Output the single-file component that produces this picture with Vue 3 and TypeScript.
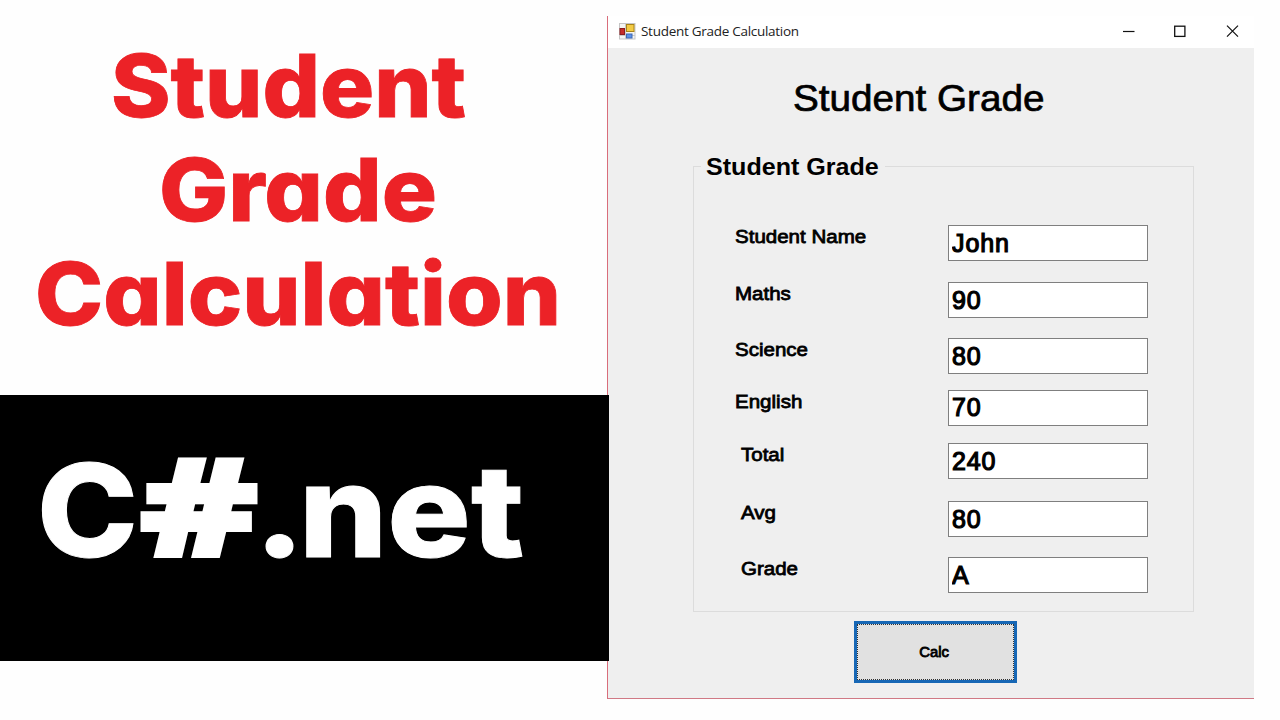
<script setup lang="ts">
import { reactive } from 'vue'

interface Field {
  id: string
  label: string
  value: string
  gap: number
  inset?: boolean
}

interface Run {
  text: string
  x: number
  y: number
  length: number
}

const headline: Run[] = [
  { text: 'Student', x: 111, y: 116.5, length: 355 },
  { text: 'Grade', x: 159, y: 220.5, length: 278 },
  { text: 'Calculation', x: 35, y: 324.5, length: 526 },
]

const platform: Run[] = [
  { text: 'C', x: 37, y: 162, length: 101 },
  { text: '#', x: 140, y: 161, length: 118 },
  { text: '.', x: 254, y: 162, length: 51 },
  { text: 'net', x: 299, y: 162, length: 225 },
]

const fields = reactive<Field[]>([
  { id: 'name', label: 'Student Name', value: 'John', gap: 0 },
  { id: 'maths', label: 'Maths', value: '90', gap: 21 },
  { id: 'science', label: 'Science', value: '80', gap: 20 },
  { id: 'english', label: 'English', value: '70', gap: 15.5 },
  { id: 'total', label: 'Total', value: '240', gap: 17.5, inset: true },
  { id: 'avg', label: 'Avg', value: '80', gap: 22, inset: true },
  { id: 'grade', label: 'Grade', value: 'A', gap: 20, inset: true },
])

function calculate() {
  const total = fields.slice(1, 4).reduce((sum, f) => sum + Number(f.value), 0)
  const avg = total / 3
  fields[4].value = String(total)
  fields[5].value = String(Math.round(avg))
  fields[6].value = avg >= 75 ? 'A' : avg >= 65 ? 'B' : avg >= 55 ? 'C' : 'F'
}
</script>

<template>
  <main class="page">
    <section class="promo">
      <svg class="headline" width="609" height="395" role="heading">
        <text v-for="r in headline" :key="r.text" :x="r.x" :y="r.y" :textLength="r.length" lengthAdjust="spacingAndGlyphs">{{ r.text }}</text>
      </svg>
      <div class="band">
        <svg width="609" height="266">
          <text v-for="r in platform" :key="r.text" :class="{ hash: r.text === '#' }" :x="r.x" :y="r.y" :textLength="r.length" lengthAdjust="spacingAndGlyphs">{{ r.text }}</text>
        </svg>
      </div>
    </section>

    <section class="window">
      <header class="titlebar">
        <svg class="app-icon" width="17" height="17" viewBox="0 0 17 17">
          <rect x=".5" y=".5" width="15.5" height="15.5" fill="#f5f5f3" stroke="#c5c5c5" />
          <path d="M6.5 1v15M1 5.5h6M1 12.500h15" stroke="#c9c9c9" fill="none" />
          <rect x="7.500" y="1.500" width="7.500" height="7" fill="#f3cb45" stroke="#a98418" />
          <rect x="1" y="5.500" width="4.500" height="6" fill="#c52c29" stroke="#8c1d20" />
          <rect x="7.500" y="11" width="5.500" height="4" fill="#5b91e8" stroke="#3c67b3" />
        </svg>
        <span class="caption">Student Grade Calculation</span>
        <svg class="controls" width="118" height="16" viewBox="0 0 118 16" fill="none" stroke="#111">
          <path d="M1 8.500h11.500" stroke-width="1.200" />
          <rect x="52.700" y="3.200" width="10.200" height="10.200" stroke-width="1.300" />
          <path d="M105 2.700l11 11M116 2.700l-11 11" stroke-width="1.200" />
        </svg>
      </header>

      <div class="client">
        <h1 class="title">Student Grade</h1>
        <fieldset class="group">
          <legend><span>Student Grade</span></legend>
          <div v-for="f in fields" :key="f.id" class="row" :style="{ marginTop: f.gap + 'px' }">
            <label :for="f.id" :class="{ inset: f.inset }"><span>{{ f.label }}</span></label>
            <input :id="f.id" v-model="f.value" type="text" />
          </div>
        </fieldset>
        <button class="calc" type="button" @click="calculate">
          <span class="focus"><span class="calc-text">Calc</span></span>
        </button>
      </div>
    </section>
  </main>
</template>

<style>
body {
  background: #fff;
  overflow: hidden;
}
</style>

<style scoped>
.page {
  display: flex;
  width: 1280px;
  height: 720px;
  background: #fefefe;
  font-family: 'Liberation Sans', Arial, sans-serif;
}
.promo {
  z-index: 1;
  width: 609px;
  flex: none;
}
.promo svg {
  display: block;
  font-family: Inter, sans-serif;
  font-weight: 800;
  font-feature-settings: 'cv11' 1;
}
.headline {
  font-size: 86px;
  fill: #ec2227;
  stroke: #ec2227;
  stroke-width: .8px;
}
.band {
  height: 266px;
  background: #000;
}
.band svg {
  font-size: 129px;
  fill: #fff;
  stroke: #fff;
  stroke-width: 1px;
}
.band .hash {
  font-family: 'Open Sans', 'Noto Sans', sans-serif;
  font-size: 134px;
  stroke-width: 4px;
}
.window {
  box-sizing: border-box;
  width: 647px;
  height: 683px;
  margin: 16px 0 0 -2px;
  border-left: 1px solid #d96d7b;
  border-bottom: 1px solid #d07985;
  background: #efefef;
}
.titlebar {
  display: flex;
  align-items: center;
  box-sizing: border-box;
  height: 32px;
  padding: 0 14px 2px 11px;
  background: #fff;
}
.caption {
  margin: 0 auto 0 5px;
  font: 13.500px 'Open Sans', 'Noto Sans', sans-serif;
  letter-spacing: -.28px;
  color: #222;
}
.client {
  display: flex;
  flex-direction: column;
  align-items: flex-start;
}
.title {
  margin: 29px 0 0 185px;
  font-size: 37px;
  line-height: 44px;
  font-weight: 400;
  transform: scaleX(1.045);
  transform-origin: left;
  -webkit-text-stroke: .7px #000;
  color: #000;
}
.group {
  box-sizing: border-box;
  width: 501px;
  height: 459px;
  margin: 32px 0 0 85px;
  padding: 45px 0 0 41px;
  border: 1px solid #dcdcdc;
}
.group legend {
  box-sizing: border-box;
  width: 184px;
  margin-left: -34px;
  padding: 0 0 0 5px;
  font-size: 24px;
  line-height: 27px;
  font-weight: 700;
  white-space: nowrap;
}
.group legend span {
  display: inline-block;
  transform: scaleX(1.045);
  transform-origin: left;
}
.row {
  display: flex;
  height: 36px;
}
.row label {
  box-sizing: border-box;
  width: 213px;
  font-size: 19px;
  line-height: 24px;
}
.row label span {
  display: inline-block;
  transform: scaleX(1.08);
  transform-origin: left;
  -webkit-text-stroke: .8px #000;
}
.row label.inset {
  padding-left: 6px;
}
.row input {
  box-sizing: border-box;
  width: 200px;
  height: 36px;
  padding: 0 3px;
  border: 1px solid #7f7f7f;
  background: #fff;
  color: #000;
  font: 400 25px 'Liberation Sans', Arial, sans-serif;
  letter-spacing: .9px;
  -webkit-text-stroke: 1.2px #000;
}
.calc {
  width: 163px;
  height: 62px;
  margin: 9px 0 0 246px;
  padding: 0;
  border: 3px solid #1767b5;
  background: #e1e1e1;
  color: #000;
  font: 400 14px 'Liberation Sans', Arial, sans-serif;
}
.focus {
  display: flex;
  box-sizing: border-box;
  height: 56px;
  align-items: center;
  justify-content: center;
  border: 1px dotted #333;
  padding-right: 3px;
}
.calc-text {
  transform: scaleX(1.06);
  -webkit-text-stroke: .8px #000;
}
</style>
